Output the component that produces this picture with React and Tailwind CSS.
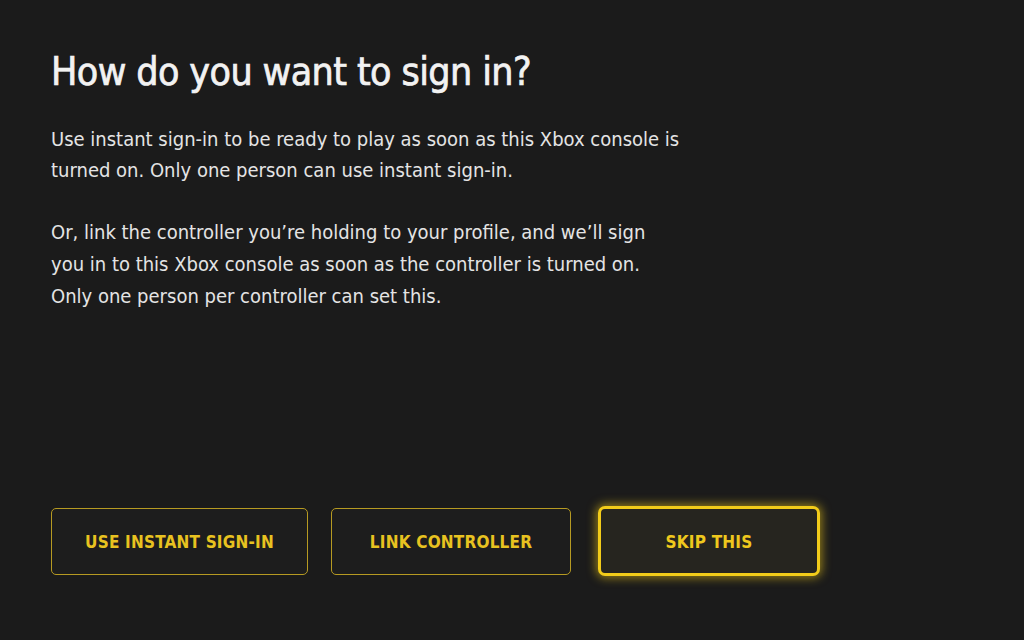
import React from "react";

const font = { fontFamily: "'DejaVu Sans Condensed', 'Roboto', sans-serif" };

function ActionButton({ label, focused }) {
  if (focused) {
    return (
      <button className="flex h-[70px] w-[222px] items-center justify-center whitespace-nowrap rounded-[7px] border-[3px] border-[#f2cc1a] bg-[#26251f] pt-[4px] text-[17px] font-bold tracking-[0.2px] text-[#efc81d] shadow-[0_0_10px_2px_rgba(242,204,26,0.55)]">
        {label}
      </button>
    );
  }
  return (
    <button className="flex h-[67px] w-full items-center justify-center whitespace-nowrap rounded-[5px] border border-[#b69a22] bg-[#1d1d1d] pt-[4px] text-[17px] font-bold tracking-[0.2px] text-[#e8c220]">
      {label}
    </button>
  );
}

export default function App() {
  return (
    <div className="flex h-[640px] w-full flex-col bg-[#1b1b1b] pl-[51px] pt-[46px] pb-[64px]" style={font}>
      <h1 className="text-[39px] leading-[52px] tracking-[-0.6px] text-[#f2f2f2] [-webkit-text-stroke:0.7px_#f2f2f2]">
        How do you want to sign in?
      </h1>

      <div className="mt-[26px] text-[20px] leading-[31px] text-[#e4e4e4]">
        <p>
          Use instant sign-in to be ready to play as soon as this Xbox console is
          <br />
          turned on. Only one person can use instant sign-in.
        </p>
        <p className="mt-[30px] leading-[32px]">
          Or, link the controller you’re holding to your profile, and we’ll sign
          <br />
          you in to this Xbox console as soon as the controller is turned on.
          <br />
          Only one person per controller can set this.
        </p>
      </div>

      <div className="mt-auto flex items-center">
        <div className="w-[257px]">
          <ActionButton label="USE INSTANT SIGN-IN" />
        </div>
        <div className="ml-[23px] w-[240px]">
          <ActionButton label="LINK CONTROLLER" />
        </div>
        <div className="ml-[27px]">
          <ActionButton label="SKIP THIS" focused />
        </div>
      </div>
    </div>
  );
}
